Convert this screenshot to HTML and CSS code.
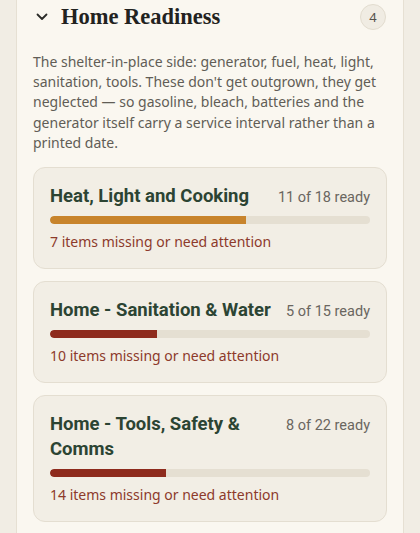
FILE: index.html
```html
<!DOCTYPE html>
<html>
<head>
<meta charset="utf-8">
<link rel="stylesheet" href="styles.css">
</head>
<body>
<div class="page">
  <section class="panel">
    <header class="panel-head">
      <svg class="chev" viewBox="0 0 12 8" width="12" height="8"><path d="M1.5 1.5 L6 6 L10.5 1.5" fill="none" stroke="#2b2b28" stroke-width="1.8" stroke-linecap="round" stroke-linejoin="round"/></svg>
      <h2 class="panel-title">Home Readiness</h2>
      <span class="badge">4</span>
    </header>
    <p class="desc">The shelter-in-place side: generator, fuel, heat, light, sanitation, tools. These don't get outgrown, they get neglected — so gasoline, bleach, batteries and the generator itself carry a service interval rather than a printed date.</p>
    <div class="cards">
      <div class="card">
        <div class="card-top">
          <h3 class="card-title">Heat, Light and Cooking</h3>
          <span class="meta">11 of 18 ready</span>
        </div>
        <div class="bar"><div class="fill fill-warn" style="width:61.1%"></div></div>
        <div class="attn">7 items missing or need attention</div>
      </div>
      <div class="card">
        <div class="card-top">
          <h3 class="card-title">Home - Sanitation &amp; Water</h3>
          <span class="meta">5 of 15 ready</span>
        </div>
        <div class="bar"><div class="fill fill-bad" style="width:33.3%"></div></div>
        <div class="attn">10 items missing or need attention</div>
      </div>
      <div class="card">
        <div class="card-top">
          <h3 class="card-title">Home - Tools, Safety &amp; Comms</h3>
          <span class="meta">8 of 22 ready</span>
        </div>
        <div class="bar"><div class="fill fill-bad" style="width:36.4%"></div></div>
        <div class="attn">14 items missing or need attention</div>
      </div>
      <div class="card card-stub"></div>
    </div>
  </section>
</div>
</body>
</html>
```
FILE: styles.css
```css
* { box-sizing: border-box; }
html, body { margin: 0; padding: 0; }
body {
  background: #f1ede4;
  font-family: "Noto Sans", "DejaVu Sans", sans-serif;
  height: 533px;
  overflow: hidden;
}
.page { padding: 0 16px; }
.panel {
  background: #faf7f0;
  border: 1px solid #e6e0d3;
  border-top: none;
  padding: 0 16px 0 16px;
  min-height: 600px;
}
.panel-head {
  height: 34px;
  display: flex;
  align-items: center;
}
.chev { margin-left: 3px; margin-right: 13px; display: block; }
.panel-title {
  margin: 0;
  font-family: "Liberation Serif", "DejaVu Serif", serif;
  font-weight: 700;
  font-size: 22.5px;
  color: #222220;
  flex: 1;
}
.badge {
  width: 26px; height: 26px;
  border-radius: 50%;
  border: 1px solid #e2dccf;
  background: #f0ece3;
  display: flex; align-items: center; justify-content: center;
  font-size: 13px;
  color: #55524c;
  margin-right: 1px;
}
.desc {
  margin: 18px 0 14px;
  font-size: 14px;
  line-height: 20.2px;
  color: #615d56;
}
.cards { display: flex; flex-direction: column; gap: 12px; }
.card {
  background: #f2eee5;
  border: 1px solid #e4ded1;
  border-radius: 12px;
  padding: 16px 16px 16px;
}
.card-stub { height: 60px; }
.card-top {
  display: flex;
  align-items: baseline;
  justify-content: space-between;
  gap: 10px;
}
.card-title {
  margin: 0;
  font-family: Roboto, "Liberation Sans", sans-serif;
  font-size: 18.5px;
  line-height: 25px;
  font-weight: 700;
  color: #2c4433;
}
.meta {
  font-family: Roboto, "Liberation Sans", sans-serif;
  font-size: 14.5px;
  color: #6a665f;
  white-space: nowrap;
}
.bar {
  margin-top: 7px;
  height: 8px;
  border-radius: 4px;
  background: #e5dfd2;
  overflow: hidden;
}
.fill { height: 100%; border-radius: 4px 0 0 4px; }
.fill-warn { background: #c8842c; }
.fill-bad { background: #8e2b1d; }
.attn {
  margin-top: 8px;
  font-size: 14px;
  line-height: 20px;
  color: #8d3a2b;
}
```
